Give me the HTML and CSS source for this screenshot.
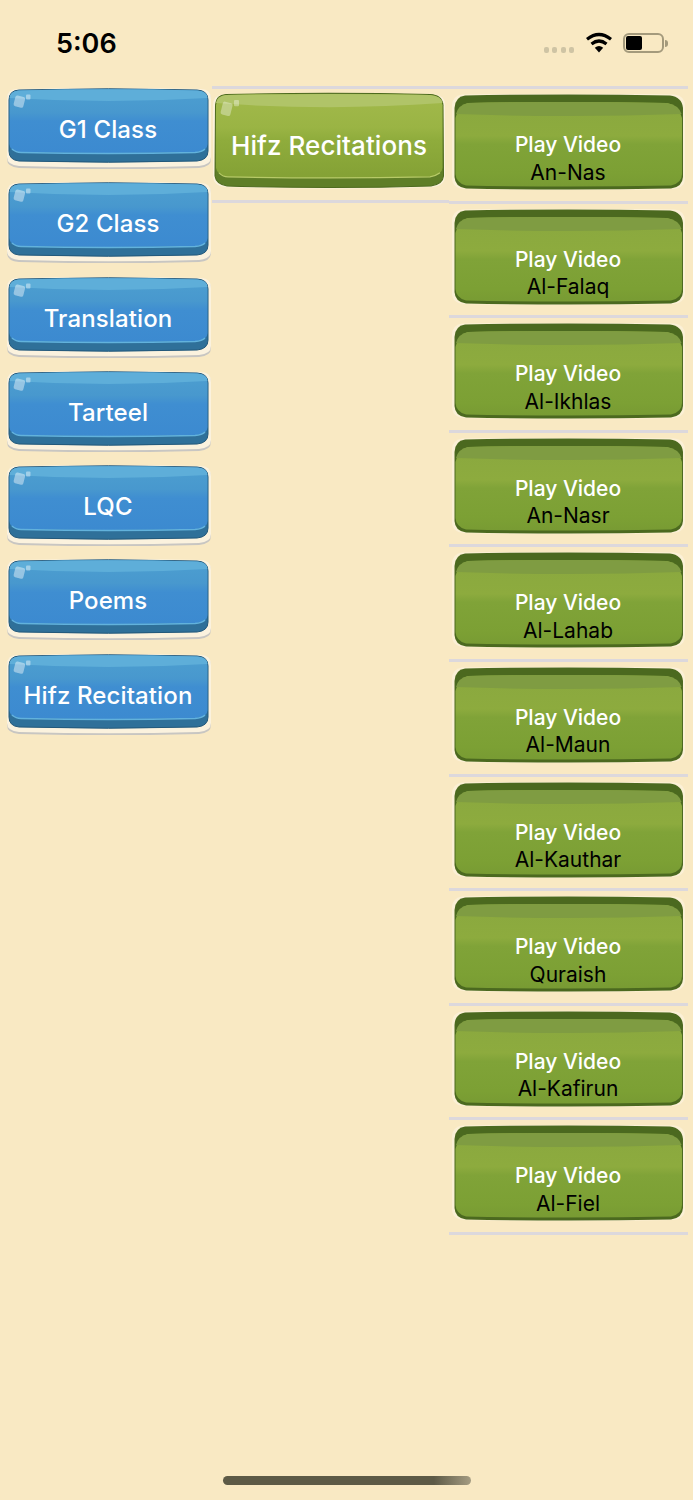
FILE: index.html
```html
<!DOCTYPE html>
<html lang="en">
<head>
<meta charset="utf-8">
<title>Hifz Recitations</title>
<link rel="stylesheet" href="styles.css">
</head>
<body>
<svg class="defs" width="0" height="0" aria-hidden="true">
  <defs>
    <linearGradient id="gBlue" x1="0" y1="0" x2="0" y2="1">
      <stop offset="0" stop-color="#4d9fd0"/><stop offset=".36" stop-color="#4898ce"/>
      <stop offset=".5" stop-color="#3f8ed1"/><stop offset="1" stop-color="#3c8ad0"/>
    </linearGradient>
    <linearGradient id="gLeaf" x1="0" y1="0" x2="0" y2="1">
      <stop offset="0" stop-color="#a2b94b"/><stop offset=".4" stop-color="#9ab444"/>
      <stop offset=".55" stop-color="#8fac3c"/><stop offset="1" stop-color="#84a135"/>
    </linearGradient>
    <linearGradient id="gOlive" x1="0" y1="0" x2="0" y2="1">
      <stop offset="0" stop-color="#8aa83f"/><stop offset=".4" stop-color="#8dab3e"/>
      <stop offset=".5" stop-color="#80a338"/><stop offset=".85" stop-color="#7ca034"/><stop offset="1" stop-color="#789b33"/>
    </linearGradient>
    <symbol id="btnBlue" viewBox="0 0 204 82" preserveAspectRatio="none">
      <path d="M10 3Q102 1 194 3Q204 3 204 13V72Q204 80 192 81Q102 83.500 12 81Q0 80 0 72V13Q0 3 10 3Z" fill="#c8c6c2"/>
      <path d="M10 2Q102 0 194 2Q204 2 204 12V70Q204 78 192 79Q102 81.500 12 79Q0 78 0 70V12Q0 2 10 2Z" fill="#fbf2de"/>
      <path d="M12 3Q102 .6 190 3Q201 3.500 201 13V64Q201 73 190 74Q102 76.500 12 74Q2 73 2 64V13Q2 3.500 12 3Z" fill="#2f7099" stroke="#23587a" stroke-width="1"/>
      <path d="M12 3.500Q102 1.200 190 3.500Q200.500 4 200.500 13V57Q200.500 64 190 65Q102 67 12 65Q2.500 64 2.500 57V13Q2.500 4 12 3.500Z" fill="url(#gBlue)"/>
      <path d="M12 3.500Q102 1.200 190 3.500Q200.500 4 200.500 11Q102 17 2.500 11Q3 4 12 3.500Z" fill="#5eaed9"/>
      <path d="M5 62Q9 65.500 14 65.500Q102 67.500 188 65.500Q195 65 198 62" fill="none" stroke="#62b2dc" stroke-width="1.500"/>
      <rect x="7.500" y="9" width="10" height="11" rx="2" transform="rotate(14 12 14)" fill="#fff" opacity=".42"/>
      <rect x="19" y="7.500" width="4.500" height="5" rx="1" fill="#fff" opacity=".42"/>
    </symbol>
    <symbol id="btnLeaf" viewBox="0 0 232 98" preserveAspectRatio="none">
      <path d="M10 4Q116 1 222 4Q232 4 232 14V84Q232 94 220 95Q116 98 12 95Q0 94 0 84V14Q0 4 10 4Z" fill="#fbf2dc"/>
      <path d="M13 3.500Q116 1 217 3.500Q229 4 230 14L230.500 84Q230 92 218 94Q116 97 14 94Q3 92 2 84L2.500 14Q3 4 13 3.500Z" fill="#5f7e27" stroke="#4d6a1e" stroke-width="1"/>
      <path d="M13 4Q116 1.800 217 4Q229 5 229.500 14V76Q229 83 218 85Q116 87 14 85Q4 83 3 76V14Q4 5 13 4Z" fill="url(#gLeaf)"/>
      <path d="M13 4Q116 1.800 217 4Q229 5 229.500 12Q116 20 3 12Q4 5 13 4Z" fill="#b0c468"/>
      <path d="M6 81Q10 85 15 85Q116 87 217 85Q223 84 227 81" fill="none" stroke="#b7ca68" stroke-width="1.200"/>
      <rect x="8.500" y="11" width="10" height="13" rx="2" transform="rotate(14 13 18)" fill="#fff" opacity=".34"/>
      <rect x="21" y="9" width="5" height="6" rx="1" fill="#fff" opacity=".34"/>
    </symbol>
    <symbol id="btnOlive" viewBox="0 0 232 96" preserveAspectRatio="none">
      <path d="M10 .5Q116 -1.500 222 .5Q232 2 232 12V84Q232 94 220 95Q116 97 12 95Q0 94 0 84V12Q0 2 10 .5Z" fill="#fbf0d6"/>
      <path d="M13 1.500Q116 -.5 217 1.500Q229 3 230 14V83Q229.500 93 218 94.500Q116 96.500 14 94.500Q3 93 2.500 83V14Q3 3 13 1.500Z" fill="#4b691f"/>
      <path d="M16 9Q116 7 214 9Q226 11 229 24V80Q229 89 218 91.500Q116 93.500 14 91.500Q4 89 3.500 80V24Q6 11 16 9Z" fill="url(#gOlive)"/>
      <path d="M16 9Q116 7 214 9Q226 11 228.500 20Q116 24 4 20Q6 11 16 9Z" fill="#7f9c42"/>
    </symbol>
  </defs>
</svg>
<div class="screen">
  <header class="status">
    <span class="time">5:06</span>
    <div class="status-icons">
      <span class="signal"><i></i><i></i><i></i><i></i></span>
      <svg class="wifi" viewBox="0 0 28 21" width="28" height="21" aria-hidden="true">
        <path d="M14 20.500L9.800 15.700Q14 12.300 18.200 15.700Z" fill="#000"/>
        <path d="M6.500 12Q14 6 21.500 12" fill="none" stroke="#000" stroke-width="3.200"/>
        <path d="M2 7.300Q14 -2.300 26 7.300" fill="none" stroke="#000" stroke-width="3.200"/>
      </svg>
      <span class="battery"><span class="battery-fill"></span></span>
      <span class="battery-cap"></span>
    </div>
  </header>
  <main class="columns">
    <nav class="col-menu">
      <a class="menu-btn"><svg class="art"><use href="#btnBlue"/></svg><span class="label">G1 Class</span></a>
      <a class="menu-btn"><svg class="art"><use href="#btnBlue"/></svg><span class="label">G2 Class</span></a>
      <a class="menu-btn"><svg class="art"><use href="#btnBlue"/></svg><span class="label">Translation</span></a>
      <a class="menu-btn"><svg class="art"><use href="#btnBlue"/></svg><span class="label">Tarteel</span></a>
      <a class="menu-btn"><svg class="art"><use href="#btnBlue"/></svg><span class="label">LQC</span></a>
      <a class="menu-btn"><svg class="art"><use href="#btnBlue"/></svg><span class="label">Poems</span></a>
      <a class="menu-btn"><svg class="art"><use href="#btnBlue"/></svg><span class="label">Hifz Recitation</span></a>
    </nav>
    <section class="col-category">
      <a class="category-btn"><svg class="art"><use href="#btnLeaf"/></svg><span class="label">Hifz Recitations</span></a>
    </section>
    <section class="col-videos">
      <a class="video-row"><span class="video-btn"><svg class="art"><use href="#btnOlive"/></svg><span class="video-text"><b>Play Video</b><em>An-Nas</em></span></span></a>
      <a class="video-row"><span class="video-btn"><svg class="art"><use href="#btnOlive"/></svg><span class="video-text"><b>Play Video</b><em>Al-Falaq</em></span></span></a>
      <a class="video-row"><span class="video-btn"><svg class="art"><use href="#btnOlive"/></svg><span class="video-text"><b>Play Video</b><em>Al-Ikhlas</em></span></span></a>
      <a class="video-row"><span class="video-btn"><svg class="art"><use href="#btnOlive"/></svg><span class="video-text"><b>Play Video</b><em>An-Nasr</em></span></span></a>
      <a class="video-row"><span class="video-btn"><svg class="art"><use href="#btnOlive"/></svg><span class="video-text"><b>Play Video</b><em>Al-Lahab</em></span></span></a>
      <a class="video-row"><span class="video-btn"><svg class="art"><use href="#btnOlive"/></svg><span class="video-text"><b>Play Video</b><em>Al-Maun</em></span></span></a>
      <a class="video-row"><span class="video-btn"><svg class="art"><use href="#btnOlive"/></svg><span class="video-text"><b>Play Video</b><em>Al-Kauthar</em></span></span></a>
      <a class="video-row"><span class="video-btn"><svg class="art"><use href="#btnOlive"/></svg><span class="video-text"><b>Play Video</b><em>Quraish</em></span></span></a>
      <a class="video-row"><span class="video-btn"><svg class="art"><use href="#btnOlive"/></svg><span class="video-text"><b>Play Video</b><em>Al-Kafirun</em></span></span></a>
      <a class="video-row"><span class="video-btn"><svg class="art"><use href="#btnOlive"/></svg><span class="video-text"><b>Play Video</b><em>Al-Fiel</em></span></span></a>
    </section>
  </main>
  <footer class="home"><span class="home-bar"></span></footer>
</div>
</body>
</html>
```
FILE: styles.css
```css
* { box-sizing: border-box; }
html, body { margin: 0; padding: 0; }
body {
  background: #f9e9c3;
  font-family: Inter, "Noto Sans", "Liberation Sans", sans-serif;
  overflow: hidden;
}
.defs { display: block; height: 0; }
.screen { height: 1500px; display: flex; flex-direction: column; }

.status {
  height: 86px;
  flex: none;
  display: flex;
  justify-content: space-between;
  align-items: flex-start;
  padding: 27px 25px 0 57px;
}
.time { font-size: 27px; line-height: 32px; padding-top: 1px; font-weight: 600; color: #000; margin-left: -1px; }
.status-icons { display: flex; align-items: center; height: 32px; }
.signal { display: flex; gap: 3.500px; margin: 13px 11px 0 0; }
.signal i { width: 5px; height: 6px; border-radius: 2px; background: #cfc4a4; }
.wifi { margin-right: 10px; margin-top: -2px; }
.battery {
  width: 41px; height: 20px;
  border: 2px solid #a49a7c;
  border-radius: 6px;
  padding: 1px;
  display: flex;
}
.battery-fill { width: 16px; background: #000; border-radius: 2px; }
.battery-cap { width: 3px; height: 7px; margin-left: 1px; background: #a49a7c; border-radius: 0 3px 3px 0; }

.columns { flex: 1; display: flex; align-items: flex-start; padding-right: 5px; }
.art { display: block; grid-area: 1 / 1; width: 100%; height: 100%; }
.label { grid-area: 1 / 1; align-self: center; justify-self: center; color: #fff; font-weight: 500; white-space: nowrap; }

.col-menu { width: 212px; flex: none; display: flex; flex-direction: column; gap: 12.300px; padding: 1px 1px 0 7px; }
.menu-btn { display: grid; height: 82px; }
.menu-btn .label { font-size: 24px; line-height: 28px; padding: 4px 2px 0 0; letter-spacing: .12px; }

.col-category { width: 237px; flex: none; }
.category-btn {
  display: grid;
  height: 117px;
  padding: 2px 4px 10px 1px;
  border-top: 3px solid #dcd8dc;
  border-bottom: 3px solid #dcd8dc;
}
.category-btn .label { font-size: 26px; line-height: 30px; padding-top: 10px; letter-spacing: .06px; }

.col-videos { width: 239px; flex: none; border-top: 3px solid #dcd8dc; }
.video-row { display: block; height: 114.600px; padding: 5px 3px 0 3px; border-bottom: 3px solid #dcd8dc; }
.video-btn { display: grid; height: 96px; }
.video-text {
  grid-area: 1 / 1;
  display: flex;
  flex-direction: column;
  align-items: center;
  padding: 37px 1px 0 0;
  font-size: 21px;
  line-height: 27.500px;
}
.video-text b { font-weight: 500; color: #fff; }
.video-text em { font-style: normal; font-weight: 400; color: #000; }

.home { flex: none; height: 24px; display: flex; justify-content: center; }
.home-bar {
  width: 248px; height: 9px; border-radius: 5px;
  background: linear-gradient(90deg, #5d5a46 0%, #5d5a46 85%, #a59c82 100%);
}
```
